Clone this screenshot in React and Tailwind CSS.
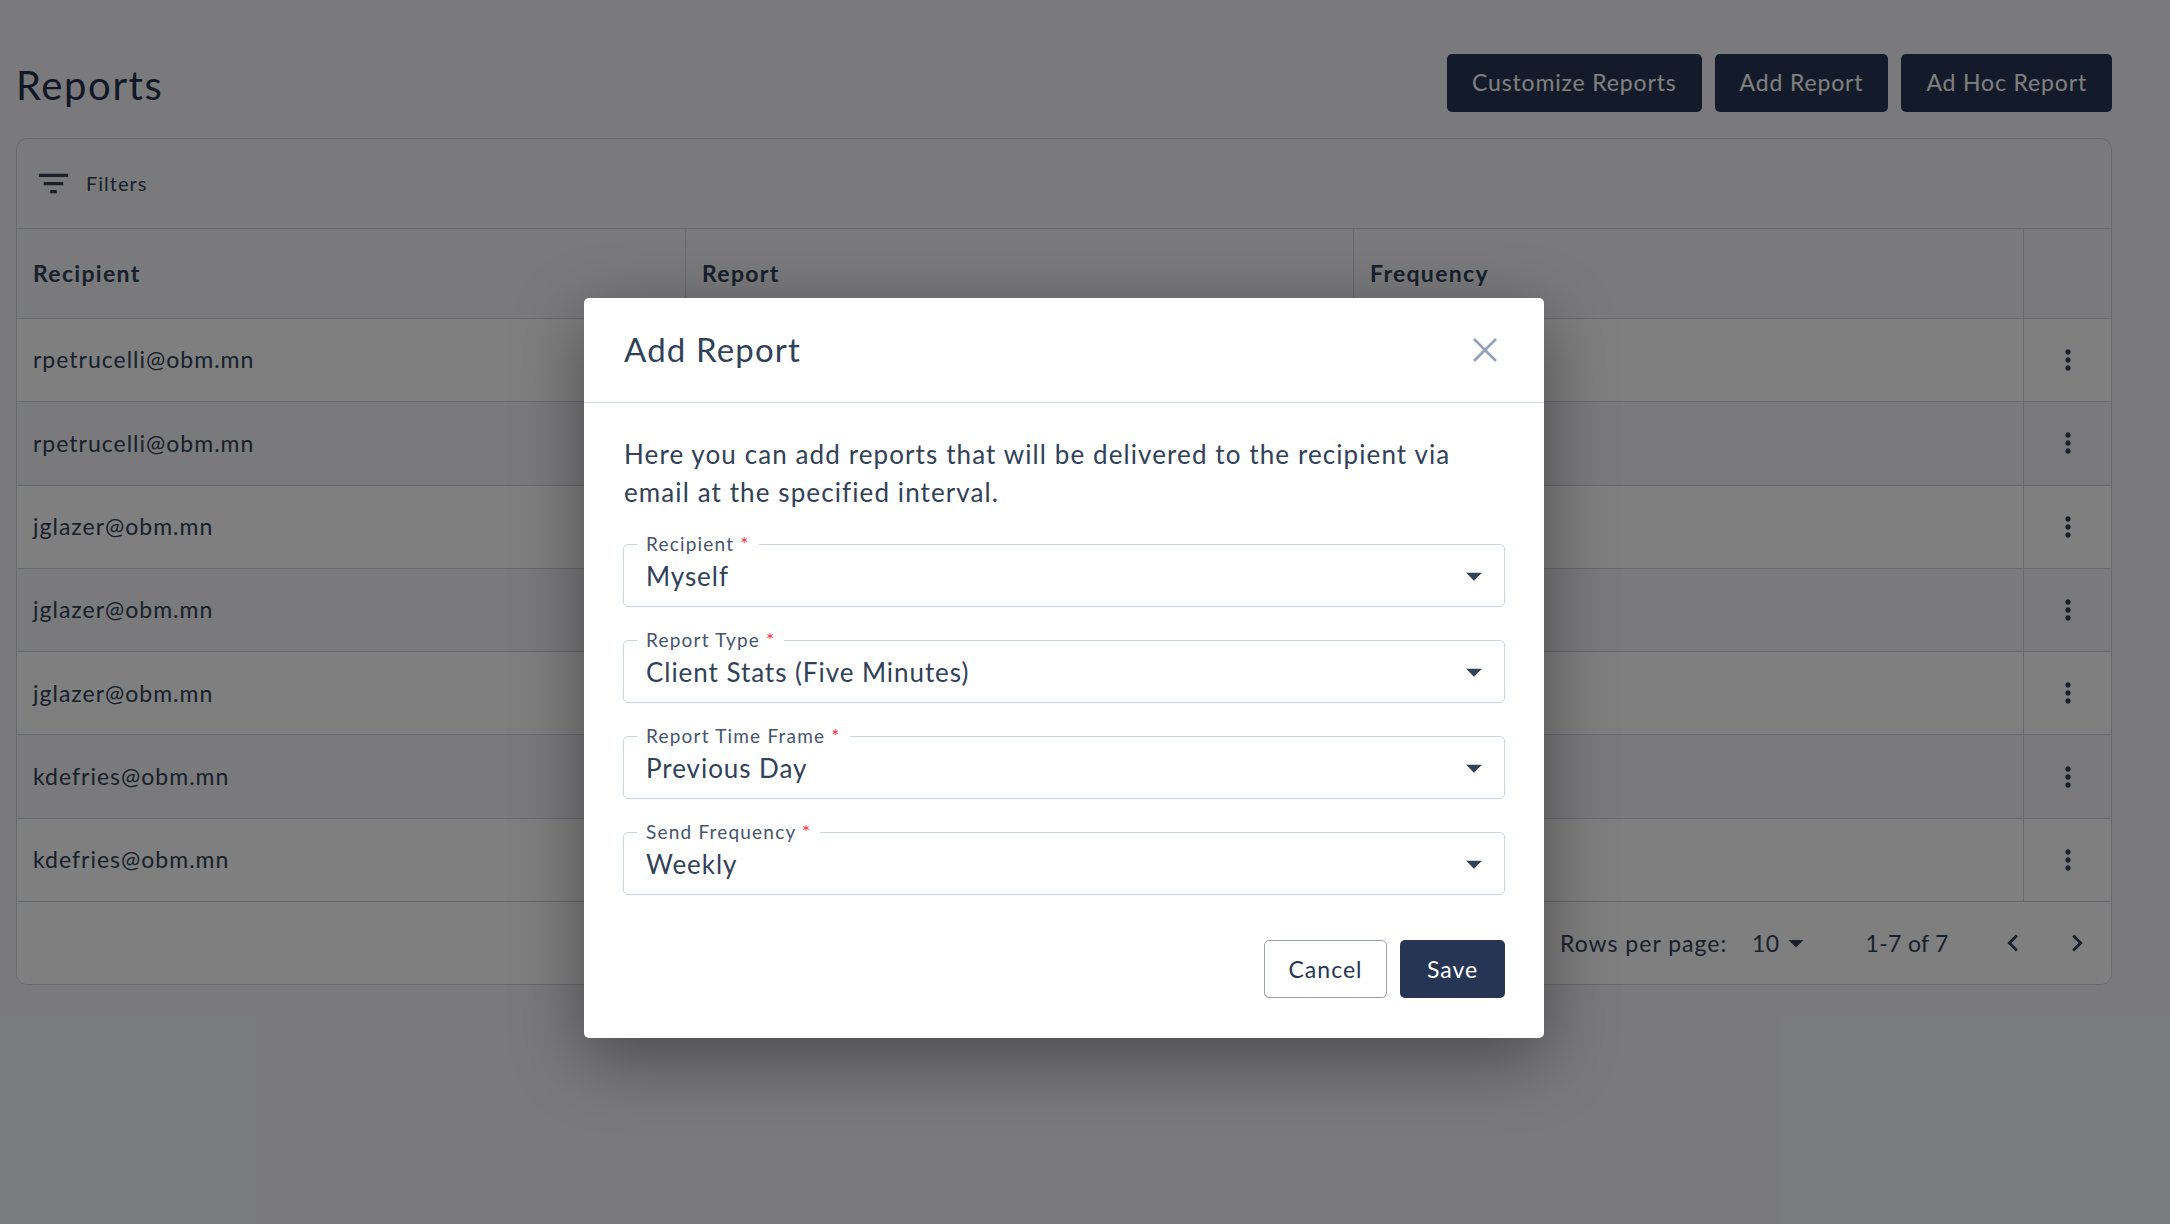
import React from 'react';

const font = { fontFamily: '"Lato", "Noto Sans", sans-serif' };

const rows = [
  'rpetrucelli@obm.mn',
  'rpetrucelli@obm.mn',
  'jglazer@obm.mn',
  'jglazer@obm.mn',
  'jglazer@obm.mn',
  'kdefries@obm.mn',
  'kdefries@obm.mn',
];

const fields = [
  { label: 'Recipient', value: 'Myself' },
  { label: 'Report Type', value: 'Client Stats (Five Minutes)' },
  { label: 'Report Time Frame', value: 'Previous Day' },
  { label: 'Send Frequency', value: 'Weekly' },
];

const Icon = ({ d, className }) => (
  <svg viewBox="0 0 24 24" fill="currentColor" className={className}>
    <path d={d} />
  </svg>
);

const FILTER = 'M10 18h4v-2h-4v2zM3 6v2h18V6H3zm3 7h12v-2H6v2z';
const KEBAB = 'M12 8c1.1 0 2-.9 2-2s-.9-2-2-2-2 .9-2 2 .9 2 2 2zm0 2c-1.1 0-2 .9-2 2s.9 2 2 2 2-.9 2-2-.9-2-2-2zm0 6c-1.1 0-2 .9-2 2s.9 2 2 2 2-.9 2-2-.9-2-2-2z';
const CARET = 'M7 10l5 5 5-5z';
const LEFT = 'M15.41 16.59 10.83 12l4.58-4.59L14 6l-6 6 6 6 1.41-1.41z';
const RIGHT = 'M8.59 16.59 13.17 12 8.59 7.41 10 6l6 6-6 6-1.41-1.41z';

const Field = ({ label, value }) => (
  <div className="relative flex h-[63px] items-center justify-between rounded-[5px] border border-slate-300 pl-[22px] pr-[11px]">
    <span className="absolute -top-[13px] left-[13px] bg-white px-[9px] text-[19px] leading-[24px] tracking-[1.2px] text-slate-600">
      {label} <span className="text-red-500">*</span>
    </span>
    <span className="text-[26px] leading-[32px] tracking-[0.95px] text-slate-700">{value}</span>
    <Icon d={CARET} className="h-[38px] w-[38px] text-slate-700" />
  </div>
);

const App = () => {
  return (
    <div style={font} className="relative h-[1224px] w-[2170px] overflow-hidden bg-[#f4f5f8] pl-4 pr-[58px] pt-[54px]">
      <div className="mb-[26px] flex h-[58px] items-center justify-between">
        <h1 className="pt-[3px] text-[40px] leading-[58px] tracking-[1.6px] text-[#222f4a]">Reports</h1>
        <div className="flex gap-[13px]">
          {['Customize Reports', 'Add Report', 'Ad Hoc Report'].map(label => (
            <button key={label} className="h-[58px] rounded-[5px] bg-[#273554] px-[25px] pb-[2px] text-[23px] tracking-[0.85px] text-white">
              {label}
            </button>
          ))}
        </div>
      </div>

      <div className="overflow-hidden rounded-[11px] border border-slate-300 text-[23px] text-slate-700">
        <div className="flex h-[90px] items-center gap-[13px] border-b border-slate-300 pl-[17px] text-[20px] tracking-[1px]">
          <Icon d={FILTER} className="h-[39px] w-[39px] text-slate-700" />
          <span className="pb-[1px]">Filters</span>
        </div>

        <div className="flex h-[90px] border-b border-slate-300 font-bold tracking-[1.3px]">
          <div className="flex w-[669px] items-center border-r border-slate-300 pl-4">Recipient</div>
          <div className="flex w-[668px] items-center border-r border-slate-300 pl-4">Report</div>
          <div className="flex w-[670px] items-center border-r border-slate-300 pl-4">Frequency</div>
          <div className="flex-1" />
        </div>

        {rows.map((email, i) => (
          <div key={i} className={`flex h-[83.3px] border-b border-slate-300 ${i % 2 === 0 ? 'bg-white' : 'bg-[#f4f5f8]'}`}>
            <div className="flex w-[2007px] items-center border-r border-slate-300 pb-[1px] pl-4 tracking-[1px]">{email}</div>
            <div className="flex flex-1 items-center justify-center">
              <Icon d={KEBAB} className="h-8 w-8 text-slate-700" />
            </div>
          </div>
        ))}

        <div className="flex h-[82px] items-center bg-white pl-[1543px]">
          <span className="w-[192px] tracking-[1px]">Rows per page:</span>
          <span className="tracking-[0.45px]">10</span>
          <Icon d={CARET} className="-ml-[2px] h-[36px] w-[36px] text-slate-700" />
          <span className="ml-[52px] w-[130px] tracking-[0.3px]">1-7 of 7</span>
          <Icon d={LEFT} className="h-[34px] w-[34px] text-slate-700" />
          <Icon d={RIGHT} className="ml-[30px] h-[34px] w-[34px] text-slate-700" />
        </div>
      </div>

      <div className="absolute inset-0 bg-black/50" />

      <div className="absolute left-[584px] top-[298px] h-[740px] w-[960px] rounded-[5px] bg-white shadow-[0_20px_70px_rgba(0,0,0,0.4)]">
        <div className="flex h-[105px] items-center justify-between border-b border-slate-300 pl-10 pr-[47px]">
          <h2 className="text-[33px] tracking-[1.15px] text-slate-700">Add Report</h2>
          <svg viewBox="0 0 24 24" className="h-[24px] w-[24px] text-slate-400" fill="none" stroke="currentColor" strokeWidth="2.6">
            <path d="M1 1l22 22M23 1L1 23" />
          </svg>
        </div>
        <div className="px-[39px] pt-[32px]">
          <p className="mb-[33px] pl-[1px] text-[26px] leading-[38px] tracking-[1.1px] text-slate-700">
            Here you can add reports that will be delivered to the recipient via email at the specified interval.
          </p>
          <div className="flex flex-col gap-[33px]">
            {fields.map(f => (
              <Field key={f.label} label={f.label} value={f.value} />
            ))}
          </div>
          <div className="mt-[45px] flex justify-end gap-[13px]">
            <button className="h-[58px] w-[123px] rounded-[5px] border border-gray-400 bg-white text-[23px] tracking-[1px] text-[#273554]">
              Cancel
            </button>
            <button className="h-[58px] w-[105px] rounded-[5px] bg-[#273554] text-[23px] tracking-[1px] text-white">
              Save
            </button>
          </div>
        </div>
      </div>
    </div>
  );
};

export default App;
